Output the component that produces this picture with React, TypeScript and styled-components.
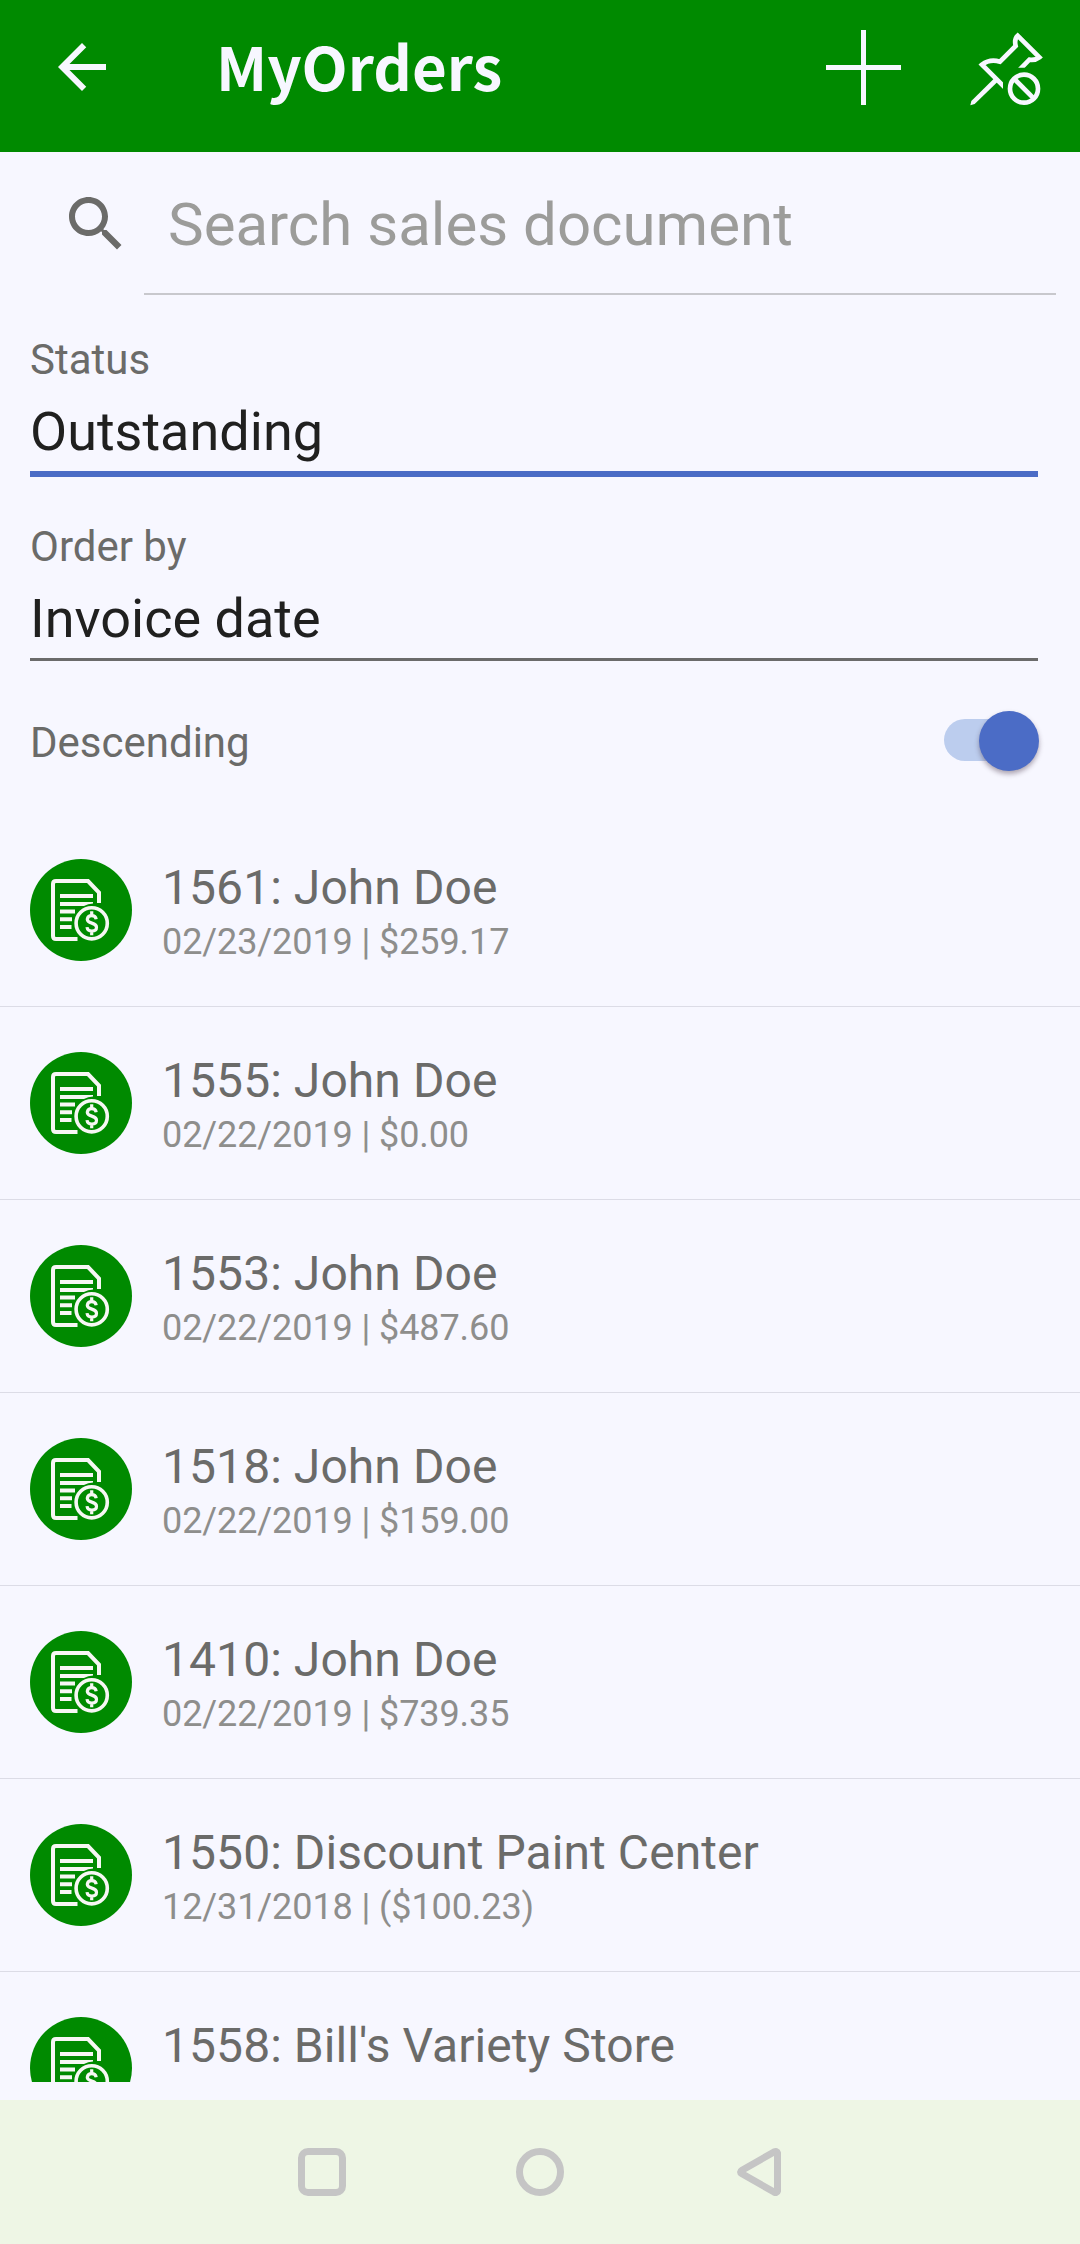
import React from 'react';
import styled, { createGlobalStyle } from 'styled-components';

const Global = createGlobalStyle`
  * { box-sizing: border-box; }
  html, body { margin: 0; padding: 0; background: #f7f7ff; }
  svg { display: block; flex: none; }
`;

const Screen = styled.div`
  width: 1080px;
  height: 2244px;
  display: flex;
  flex-direction: column;
  overflow: hidden;
  background: #f7f7ff;
  font-family: Roboto, 'Liberation Sans', sans-serif;
  color: #6b6b69;
`;

const Header = styled.header`
  height: 152px;
  flex: none;
  display: flex;
  align-items: flex-start;
  background: #008a00;
  color: #f7f7ff;
  padding: 30px 30px 0 46px;
`;

const BackButton = styled.div`
  margin-top: 1px;
`;

const Title = styled.h1`
  margin: 0 0 0 98px;
  flex: 1;
  height: 75px;
  line-height: 70px;
  font-family: 'Noto Sans CJK JP', 'Noto Sans', sans-serif;
  font-size: 60px;
  font-weight: 700;
  white-space: nowrap;
`;

const Actions = styled.div`
  display: flex;
  gap: 66px;
  padding-right: 7px;
`;

const SearchBar = styled.div`
  height: 143px;
  flex: none;
  display: flex;
  padding: 0 24px 0 60px;
`;

const SearchIcon = styled.div`
  width: 84px;
  padding-top: 36px;
`;

const SearchField = styled.div`
  flex: 1;
  padding: 2px 0 0 24px;
  line-height: 141px;
  font-size: 60px;
  color: #9c9c9a;
  border-bottom: 2px solid #c8c8cd;
  white-space: nowrap;
`;

const Filters = styled.section`
  flex: none;
  height: 519px;
  display: flex;
  flex-direction: column;
  padding: 40px 42px 0 30px;
`;

const Field = styled.div<{ $active?: boolean }>`
  display: flex;
  flex-direction: column;
  padding-bottom: 8px;
  margin-bottom: 45px;
  border-bottom: ${(p) => (p.$active ? '6px solid #4b6cc6' : '3px solid #6b6b6b')};
`;

const Label = styled.div`
  font-size: 42px;
  line-height: 50px;
`;

const Value = styled.div`
  margin-top: 15px;
  font-size: 54px;
  line-height: 63px;
  color: #20201f;
`;

const ToggleRow = styled.div`
  display: flex;
  justify-content: space-between;
  height: 72px;
  padding-top: 4px;
  margin-right: -2px;
`;

const ToggleLabel = styled(Label)`
  padding-top: 8px;
`;

const Track = styled.div`
  width: 84px;
  height: 42px;
  margin: 9px 12px 0 0;
  border-radius: 21px;
  background: #bccdee;
  display: flex;
  align-items: center;
`;

const Thumb = styled.div`
  flex: none;
  width: 60px;
  height: 60px;
  margin: 1px 0 0 35px;
  border-radius: 50%;
  background: #4b6cc6;
  box-shadow: 0 3px 5px rgba(60, 40, 60, 0.4);
`;

const List = styled.main`
  height: 1268px;
  flex: none;
  overflow: hidden;
`;

const Row = styled.article`
  height: 193px;
  display: flex;
  padding: 45px 30px 0;
  border-bottom: 1px solid #dcdce6;
`;

const Badge = styled.div`
  flex: none;
  width: 102px;
  height: 102px;
  border-radius: 50%;
  background: #008a00;
`;

const Info = styled.div`
  margin: 1px 0 0 30px;
`;

const Name = styled.div`
  font-size: 48px;
  line-height: 56px;
  letter-spacing: 0.07px;
  white-space: nowrap;
`;

const Detail = styled.div`
  margin-top: 5px;
  font-size: 36px;
  line-height: 42px;
  letter-spacing: -0.09px;
  color: #8e8e8c;
  white-space: nowrap;
`;

const NavBar = styled.nav`
  margin-top: 18px;
  height: 144px;
  flex: none;
  display: flex;
  justify-content: center;
  align-items: center;
  gap: 168px;
  background: #eef6e5;
`;

const DocIcon = () => (
  <svg width="102" height="102" viewBox="0 0 102 102" fill="none" stroke="#f7f7f4" strokeWidth="4">
    <path d="M47.5 80H26q-3 0-3-3V25q0-3 3-3h32l11 11.5v10.5" />
    <path d="M30 37h33M30 52.5h15M30 60.3h12M30 68h11.5" />
    <path d="M30 43h33v1.6q-5 .2-9 2.4H30z" fill="#f7f7f4" stroke="none" />
    <circle cx="61.7" cy="64.3" r="15.6" strokeWidth="3.6" />
    <path
      d="M66.2 60.2q-.6-3.6-4.5-3.6t-4.4 3.6c0 5 9.200 2.800 9.200 8 0 2.500-2 3.800-4.600 3.800q-4.400 0-4.900-3.900M61.700 52.300v4M61.700 72v4.300"
      strokeWidth="3.2"
    />
  </svg>
);

const PinOffIcon = () => (
  <svg width="76" height="76" viewBox="560 90 228 228" overflow="visible" fill="none" stroke="#f7f7ff" strokeWidth="14">
    <defs>
      <clipPath id="pinBody">
        <path d="M550 80H800V203H668V330H550z" />
      </clipPath>
    </defs>
    <g clipPath="url(#pinBody)">
      <path d="M716 211L747 179Q764 182 777 172L712 107Q701 117 706 138L659 185Q628 176 605 194L680 269" />
    </g>
    <path d="M642 235L652 245L583 312L570 316L573 303z" fill="#f7f7ff" stroke="none" />
    <circle cx="731" cy="266" r="42" />
    <path d="M702 237L760 295" />
  </svg>
);

const orders = [
  ['1561: John Doe', '02/23/2019 | $259.17'],
  ['1555: John Doe', '02/22/2019 | $0.00'],
  ['1553: John Doe', '02/22/2019 | $487.60'],
  ['1518: John Doe', '02/22/2019 | $159.00'],
  ['1410: John Doe', '02/22/2019 | $739.35'],
  ['1550: Discount Paint Center', '12/31/2018 | ($100.23)'],
  ["1558: Bill's Variety Store", ''],
];

export default function App() {
  return (
    <>
      <Global />
      <Screen>
        <Header>
          <BackButton>
            <svg width="72" height="72" viewBox="0 0 24 24" fill="#f7f7ff">
              <path d="M20 11H7.830l5.590-5.590L12 4l-8 8 8 8 1.410-1.410L7.830 13H20v-2z" />
            </svg>
          </BackButton>
          <Title>MyOrders</Title>
          <Actions>
            <svg width="75" height="75" viewBox="0 0 75 75" stroke="#f7f7ff" strokeWidth="5">
              <path d="M37.500 0V75M0 37.500H75" />
            </svg>
            <PinOffIcon />
          </Actions>
        </Header>
        <SearchBar>
          <SearchIcon>
            <svg width="72" height="72" viewBox="0 0 24 24" fill="#6b6b69">
              <path d="M15.500 14h-.790l-.280-.270C15.410 12.590 16 11.110 16 9.500 16 5.910 13.090 3 9.500 3S3 5.910 3 9.500 5.910 16 9.500 16c1.610 0 3.090-.590 4.230-1.570l.270.280v.790l5 4.990L20.490 19l-4.990-5zm-6 0C7.010 14 5 11.990 5 9.500S7.010 5 9.500 5 14 7.010 14 9.500 11.990 14 9.500 14z" />
            </svg>
          </SearchIcon>
          <SearchField>Search sales document</SearchField>
        </SearchBar>
        <Filters>
          <Field $active>
            <Label>Status</Label>
            <Value>Outstanding</Value>
          </Field>
          <Field>
            <Label>Order by</Label>
            <Value>Invoice date</Value>
          </Field>
          <ToggleRow>
            <ToggleLabel>Descending</ToggleLabel>
            <Track>
              <Thumb />
            </Track>
          </ToggleRow>
        </Filters>
        <List>
          {orders.map(([name, detail]) => (
            <Row key={name}>
              <Badge>
                <DocIcon />
              </Badge>
              <Info>
                <Name>{name}</Name>
                {detail && <Detail>{detail}</Detail>}
              </Info>
            </Row>
          ))}
        </List>
        <NavBar>
          <svg width="50" height="50" viewBox="0 0 50 50" fill="none" stroke="#c5c5c5" strokeWidth="7">
            <rect x="4.500" y="4.500" width="41" height="41" rx="6.500" />
          </svg>
          <svg width="50" height="50" viewBox="0 0 50 50" fill="none" stroke="#c5c5c5" strokeWidth="7">
            <circle cx="25" cy="25" r="20.500" />
          </svg>
          <svg width="50" height="50" viewBox="-1 0 50 50" fill="none" stroke="#c5c5c5" strokeWidth="7" strokeLinejoin="round">
            <path d="M43.500 6Q43 3.500 40 5L8 23.200Q5 25 8 26.800L40 45Q43 46.500 43.500 44z" />
          </svg>
        </NavBar>
      </Screen>
    </>
  );
}
